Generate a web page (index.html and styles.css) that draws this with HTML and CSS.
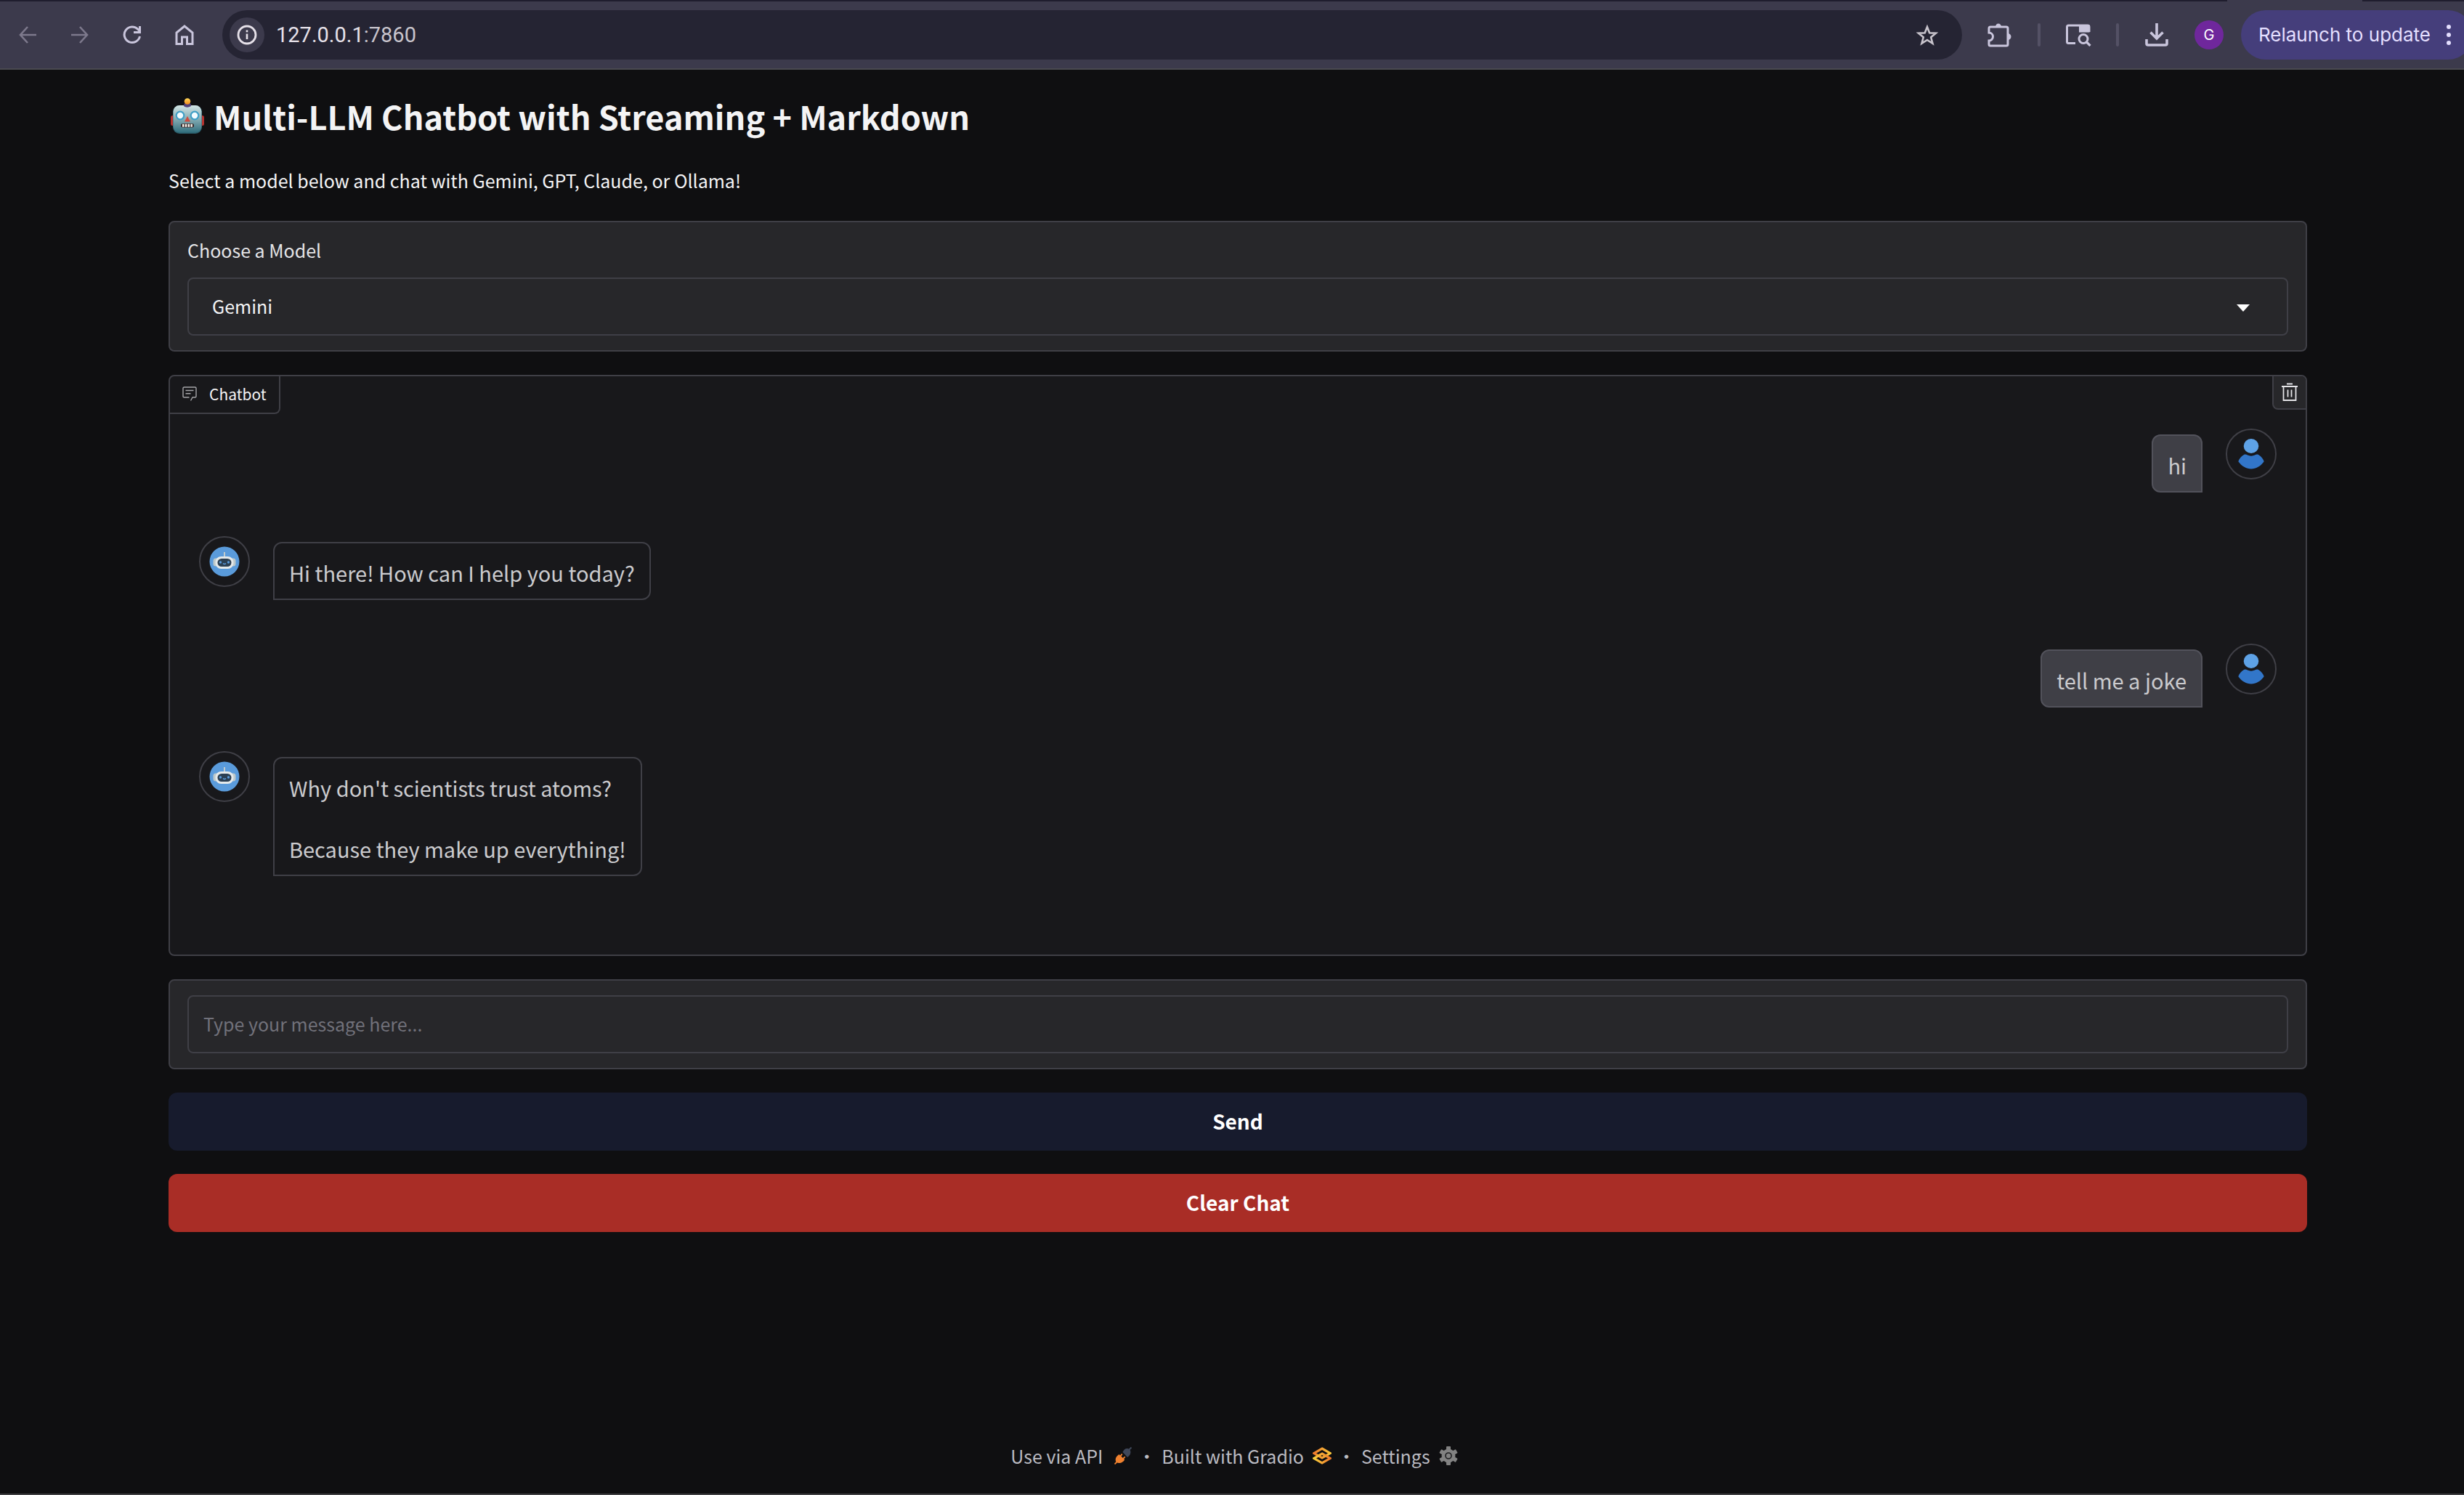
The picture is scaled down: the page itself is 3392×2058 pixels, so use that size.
FILE: index.html
```html
<!DOCTYPE html>
<html lang="en">
<head>
<meta charset="utf-8">
<title>Multi-LLM Chatbot</title>
<link rel="stylesheet" href="styles.css">
</head>
<body>
<svg class="defs" aria-hidden="true">
  <defs>
    <linearGradient id="face" x1="0" y1="0" x2="0" y2="1"><stop offset="0" stop-color="#d3e6e6"/><stop offset=".5" stop-color="#86acb3"/><stop offset="1" stop-color="#316f7e"/></linearGradient>
    <linearGradient id="lamp" x1="0" y1="0" x2="0" y2="1"><stop offset="0" stop-color="#ffd75a"/><stop offset="1" stop-color="#f08a1c"/></linearGradient>
    <linearGradient id="goldA" x1="0" y1="0" x2="1" y2="0"><stop offset="0" stop-color="#ee7a2c"/><stop offset="1" stop-color="#f8c63a"/></linearGradient>
    <linearGradient id="goldB" x1="0" y1="0" x2="1" y2="0"><stop offset="0" stop-color="#f8d03c"/><stop offset="1" stop-color="#ee7a2c"/></linearGradient>
    <symbol id="user" viewBox="0 0 36 42">
      <ellipse cx="18" cy="10" rx="10.300" ry="10" fill="#5ea2e6"/>
      <path d="M8 22c2-1 3.500-.2 5 .6 3.200 1.400 6.800 1.400 10 0 1.500-.8 3-1.600 5-.6 3.600 2 6.500 5.500 7.700 9.300C31 38 24.500 41.500 18 41.500S5 38 .3 31.300C1.500 27.500 4.400 24 8 22z" fill="#3276c9"/>
    </symbol>
    <symbol id="bot" viewBox="0 0 42 42">
      <circle cx="21" cy="21" r="20.500" fill="#5a9bdb"/>
      <path d="M20 8h2v6l4 2.500v2H16v-2l4-2.500z" fill="#c3cccd"/>
      <rect x="5.500" y="16.500" width="7" height="11" rx="3.500" fill="#bcc8ca"/><rect x="29.500" y="16.500" width="7" height="11" rx="3.500" fill="#bcc8ca"/>
      <rect x="8.500" y="14" width="25" height="17" rx="8" fill="#e4e9ea"/>
      <rect x="11.500" y="17" width="19" height="11" rx="5.500" fill="#2b3f52"/>
      <circle cx="15.500" cy="22" r="1.700" fill="#5a9bdb"/><circle cx="26.500" cy="22" r="1.700" fill="#5a9bdb"/>
      <path d="M19 23.500q2 2 4 0" fill="none" stroke="#5a9bdb" stroke-width="1.200"/>
    </symbol>
  </defs>
</svg>

<header class="toolbar">
  <nav class="nav">
    <button class="tool dim" aria-label="Back"><svg width="24" height="24" viewBox="0 0 24 24"><path d="M24 12H2M12 1 2 12l10 11" fill="none" stroke="currentColor" stroke-width="2.600"/></svg></button>
    <button class="tool dim" aria-label="Forward"><svg width="24" height="24" viewBox="0 0 24 24"><path d="M0 12h22M12 1l10 11-10 11" fill="none" stroke="currentColor" stroke-width="2.600"/></svg></button>
    <button class="tool" aria-label="Reload"><svg width="26" height="26" viewBox="0 0 26 26"><path d="M23.500 15A10.800 10.800 0 1 1 21 5.500l2.500 2.500M23.500 1v8.500H15" fill="none" stroke="currentColor" stroke-width="3"/></svg></button>
    <button class="tool" aria-label="Home"><svg width="26" height="28" viewBox="0 0 26 28"><path d="M2 26.500V11L13 2l11 9v15.500h-7.500V17h-7v9.500z" fill="none" stroke="currentColor" stroke-width="3"/></svg></button>
  </nav>
  <div class="address">
    <button class="info" aria-label="Site information"><svg width="28" height="28" viewBox="0 0 28 28"><circle cx="14" cy="14" r="12" fill="none" stroke="currentColor" stroke-width="2.800"/><path d="M12.700 7.500h2.600v2.800h-2.600zM12.700 12.500h2.600V20h-2.600z" fill="currentColor"/></svg></button>
    <div class="url">127.0.0.1<span class="port">:7860</span></div>
    <button class="star" aria-label="Bookmark this tab"><svg width="32" height="30" viewBox="0 0 32 30"><path d="m16 4 3.200 8.200 8.800.5-6.800 5.600 2.300 8.500-7.500-4.800-7.500 4.800 2.300-8.500L4 12.700l8.800-.5z" fill="none" stroke="currentColor" stroke-width="2.600"/></svg></button>
  </div>
  <div class="actions">
    <button class="tool" aria-label="Extensions"><svg width="36" height="36" viewBox="0 0 36 36"><path d="M5 7h22q2 0 2 2v22q0 2-2 2H5q-2 0-2-2v-5a5.500 5.500 0 0 0 0-11V9q0-2 2-2z" fill="none" stroke="currentColor" stroke-width="3"/><path d="M12 7a4 4.500 0 0 1 8 0zM29 16a4.500 4.500 0 0 1 0 9z" fill="currentColor"/></svg></button>
    <span class="divider"></span>
    <button class="tool" aria-label="Search tabs"><svg width="36" height="32" viewBox="0 0 36 32"><path d="M14 27.500H4.500q-2 0-2-2V5q0-2 2-2H31q2 0 2 2v7" fill="none" stroke="currentColor" stroke-width="3"/><path d="M19 2h14.500v10.500H19z" fill="currentColor"/><circle cx="25" cy="21.500" r="6" fill="none" stroke="currentColor" stroke-width="3"/><path d="m29 25.500 5.500 5.500" stroke="currentColor" stroke-width="3.200"/></svg></button>
    <span class="divider"></span>
    <button class="tool" aria-label="Downloads"><svg width="34" height="34" viewBox="0 0 34 34"><path d="M17 1v21M8.500 13.500 17 22l8.500-8.500" fill="none" stroke="currentColor" stroke-width="3.600"/><path d="M3 23v6q0 2 2 2h24q2 0 2-2v-6" fill="none" stroke="currentColor" stroke-width="3.600"/></svg></button>
    <button class="profile">G</button>
    <button class="relaunch">Relaunch to update <svg width="6" height="28" viewBox="0 0 6 28"><g fill="currentColor"><circle cx="3" cy="3" r="3"/><circle cx="3" cy="14" r="3"/><circle cx="3" cy="25" r="3"/></g></svg></button>
  </div>
</header>

<main class="app">
  <h1 class="title"><svg class="robot" width="52" height="52" viewBox="0 0 52 52" role="img" aria-label="Robot">
    <rect x="3" y="25" width="6" height="14" rx="2.500" fill="#b5322f"/><rect x="43" y="25" width="6" height="14" rx="2.500" fill="#b5322f"/>
    <rect x="6" y="11" width="40" height="39" rx="9" fill="#2c5f6d"/><rect x="6.500" y="11" width="39" height="37.500" rx="8.500" fill="url(#face)"/>
    <path d="M21 12q0-5 5-5t5 5q-5 3.500-10 0z" fill="#54427a"/><circle cx="26" cy="5.500" r="4.300" fill="url(#lamp)"/>
    <circle cx="16" cy="25" r="5.300" fill="#f2fbff" stroke="#3f9fc6" stroke-width="2.200"/><circle cx="36" cy="25" r="5.300" fill="#f2fbff" stroke="#3f9fc6" stroke-width="2.200"/>
    <path d="m26 26 4 7.500h-8z" fill="#d04a3e"/>
    <rect x="17" y="36" width="18" height="5.500" rx="2.500" fill="#38292a"/><path d="M19 36.800h2.500v4H19zm3.800 0h2.500v4h-2.500zm3.800 0h2.500v4h-2.500zm3.800 0h2.500v4h-2.500z" fill="#f6f2ea"/>
  </svg>Multi-LLM Chatbot with Streaming + Markdown</h1>
  <p class="intro">Select a model below and chat with Gemini, GPT, Claude, or Ollama!</p>

  <section class="panel">
    <label class="label" for="model">Choose a Model</label>
    <div class="dropdown">
      <select id="model" class="field select"><option>Gemini</option><option>GPT</option><option>Claude</option><option>Ollama</option></select>
      <svg class="caret" width="18" height="10" viewBox="0 0 18 10"><path d="M0 0h18L9 10z" fill="#fff"/></svg>
    </div>
  </section>

  <section class="chat">
    <div class="chat-head">
      <h2 class="tab"><svg width="20" height="20" viewBox="0 0 20 20"><path d="M9.500 15H2.500Q1 15 1 13.500v-11Q1 1 2.500 1h15Q19 1 19 2.500v11q0 1.500-1.500 1.500H14l-2.500 4.500" fill="none" stroke="currentColor" stroke-width="1.400"/><path d="M4.500 5.500h11M4.500 9.800h7" stroke="currentColor" stroke-width="1.400"/></svg>Chatbot</h2>
      <button class="trash" aria-label="Clear"><svg width="22" height="26" viewBox="0 0 22 26"><path d="M7 1.500h8M0 5h22M2.500 5v19h17V5M8.500 9.500v10M13.500 9.500v10" fill="none" stroke="currentColor" stroke-width="1.800"/></svg></button>
    </div>
    <div class="messages">
      <div class="row user"><span class="avatar"><svg width="36" height="42"><use href="#user"/></svg></span><div class="bubble"><p>hi</p></div></div>
      <div class="row"><span class="avatar"><svg width="42" height="42"><use href="#bot"/></svg></span><div class="bubble"><p>Hi there! How can I help you today?</p></div></div>
      <div class="row user"><span class="avatar"><svg width="36" height="42"><use href="#user"/></svg></span><div class="bubble"><p>tell me a joke</p></div></div>
      <div class="row"><span class="avatar"><svg width="42" height="42"><use href="#bot"/></svg></span><div class="bubble"><p>Why don't scientists trust atoms?</p><p>Because they make up everything!</p></div></div>
    </div>
  </section>

  <section class="panel">
    <input class="field" type="text" placeholder="Type your message here..." aria-label="Message">
  </section>
  <button class="action send">Send</button>
  <button class="action clear">Clear Chat</button>
</main>

<footer class="footer">
  <a href="#api">Use via API <svg class="plug" width="24" height="24" viewBox="0 0 24 24"><path d="M.5 23.500 4 20" stroke="#f0812f" stroke-width="1.800"/><path d="M2.500 20.500C.5 16 2.500 13 6.500 10l1.500 1.500 2-2.500 1.500 1-2 2.800 2.200 2.200 2.500-2.300 1.200 1.300-2.200 2.300 1 1.200c-3 4.500-7 6-11.700 3z" fill="#f0812f"/><path d="M11.500 7c2-5 6-6.500 10-3.500 2 4 .5 8-3.500 10.500z" fill="#3f4759"/><path d="m20 4 3.500-3.500" stroke="#3f4759" stroke-width="2"/></svg></a>
  <span class="dot">·</span>
  <a href="#gradio">Built with Gradio <svg width="26" height="24" viewBox="0 0 26 24"><path d="M13 2 24.300 8.500 13 15 1.700 8.500z" fill="none" stroke="url(#goldA)" stroke-width="3.200"/><path d="M13 9 24.300 15.500 13 22 1.700 15.500z" fill="none" stroke="url(#goldB)" stroke-width="3.200"/></svg></a>
  <span class="dot">·</span>
  <a href="#settings">Settings <svg width="26" height="26" viewBox="0 0 26 26"><g fill="#828282"><rect x="10" y="0" width="6" height="26" rx="1"/><rect x="10" y="0" width="6" height="26" rx="1" transform="rotate(60 13 13)"/><rect x="10" y="0" width="6" height="26" rx="1" transform="rotate(120 13 13)"/><circle cx="13" cy="13" r="9.500"/></g><circle cx="13" cy="13" r="4" fill="#828282" stroke="#1d1d1f" stroke-width="1.600"/></svg></a>
</footer>
</body>
</html>
```
FILE: styles.css
```css
* { box-sizing: border-box; }

body {
  margin: 0;
  min-height: 100vh;
  display: flex;
  flex-direction: column;
  background: #0f0f11;
  color: #f4f4f5;
  font: 25px/36px "Noto Sans CJK SC", sans-serif;
  border-bottom: 2px solid #3f3f41;
}
h1, h2, p { margin: 0; }
button { border: 0; padding: 0; margin: 0; background: none; color: inherit; font: inherit; cursor: pointer; }
svg { display: block; flex: none; }
.defs { position: absolute; width: 0; height: 0; }

/* browser toolbar */
.toolbar {
  display: flex;
  align-items: center;
  height: 96px;
  padding: 2px 0 0 2px;
  overflow: hidden;
  color: #c9c5dc;
  border-bottom: 2px solid #4a4a50;
  background:
    linear-gradient(90deg, #1f1d2e calc(100% - 326px), transparent 0, transparent calc(100% - 140px), #1f1d2e 0) 0 0 / 100% 2px no-repeat,
    #3c3a4c;
  font-family: Inter, sans-serif;
}
.nav { display: flex; }
.tool { width: 72px; height: 68px; display: grid; place-items: center; }
.dim { color: #7d798c; }
.address {
  flex: 1;
  display: flex;
  align-items: center;
  gap: 16px;
  height: 68px;
  margin: 0 16px;
  padding: 0 32px 0 10px;
  border-radius: 34px;
  background: #252433;
}
.info { width: 48px; height: 48px; display: grid; place-items: center; border-radius: 50%; background: #3c3a4c; color: #e6e1e9; }
.url { flex: 1; font: 29px/36px Roboto, sans-serif; color: #e6e1e9; }
.port { color: #c8c4cc; }
.star { color: #c8c4cc; }
.actions { display: flex; align-items: center; gap: 16px; margin-right: -12px; }
.divider { width: 4px; height: 32px; border-radius: 2px; background: #545165; }
.profile { width: 40px; height: 40px; border-radius: 50%; background: #6f279c; color: #fff; font-size: 20px; line-height: 40px; }
.relaunch {
  display: flex;
  align-items: center;
  gap: 22px;
  height: 68px;
  margin-left: 8px;
  padding: 0 30px 0 24px;
  border-radius: 34px;
  background: #453e7b;
  color: #e4dfff;
  font-size: 26px;
}

/* app */
.app { flex: 1; display: flex; flex-direction: column; padding: 34px 216px 32px 232px; }
.title { display: flex; align-items: center; gap: 10px; font-size: 45px; line-height: 60px; }
.intro { margin: 40px 0 38px; }
.panel { margin-bottom: 32px; padding: 20px 24px; border: 2px solid #3f3f46; border-radius: 8px; background: #27272a; }
.label { display: block; margin-bottom: 20px; color: #e4e4e7; }
.field {
  display: block;
  width: 100%;
  height: 80px;
  padding: 0 20px 2px;
  border: 2px solid #3f3f46;
  border-radius: 8px;
  background: #27272a;
  color: #f4f4f5;
  font: inherit;
}
.field::placeholder { color: #71717a; opacity: 1; }
.dropdown { display: grid; align-items: center; }
.dropdown > * { grid-area: 1 / 1; }
.select { appearance: none; padding: 0 32px 2px; }
.caret { justify-self: end; margin: 4px 53px 0 0; pointer-events: none; }

/* chat */
.chat { min-height: 800px; margin-bottom: 32px; border: 2px solid #3f3f46; border-radius: 8px; background: #18181b; overflow: hidden; }
.chat-head { display: flex; justify-content: space-between; align-items: flex-start; }
.tab {
  display: flex;
  align-items: center;
  gap: 17px;
  height: 52px;
  padding: 0 17px 2px;
  border: solid #3f3f46;
  border-width: 0 2px 2px 0;
  border-radius: 0 0 8px 0;
  font-size: 21px;
  font-weight: 400;
}
.tab svg { color: #a6a6aa; }
.trash { width: 46px; height: 46px; display: grid; place-items: center; border: solid #3f3f46; border-width: 0 0 2px 2px; border-radius: 0 0 0 8px; background: #27272a; color: #e4e4e7; }
.messages { display: flex; flex-direction: column; gap: 60px; padding: 20px 40px; }
.row { display: flex; align-items: flex-start; gap: 32px; }
.row.user { flex-direction: row-reverse; }
.avatar { flex: none; width: 70px; height: 70px; display: grid; place-items: center; border: 2px solid #3f3f46; border-radius: 50%; }
.bubble {
  display: flex;
  flex-direction: column;
  gap: 42px;
  margin-top: 8px;
  padding: 19px 20px 15px;
  border: 2px solid #3f3f46;
  border-radius: 12px 12px 12px 0;
  color: #cbcbce;
  font-size: 29px;
  line-height: 42px;
}
.user .bubble { border-color: #52525b; border-radius: 12px 12px 0 12px; background: #3f3f46; }

/* buttons */
.action { height: 80px; padding-bottom: 2px; border-radius: 12px; color: #fff; font-size: 28px; font-weight: 700; }
.send { margin-bottom: 32px; background: #171b2d; }
.clear { background: #a92d26; }

.footer { display: flex; justify-content: center; gap: 8px; padding: 0 0 34px 6px; color: #bbbbc2; }
.footer a { display: flex; align-items: center; gap: 12px; color: inherit; text-decoration: none; }
.footer .plug { margin-left: 4px; }
```
